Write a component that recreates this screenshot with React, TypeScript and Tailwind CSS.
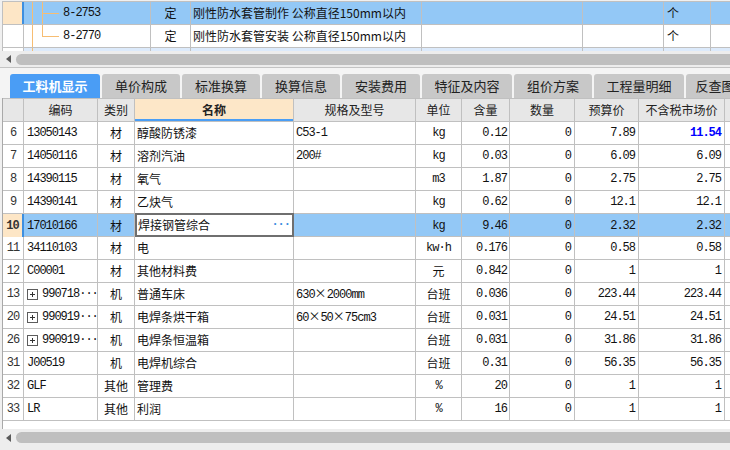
import React from 'react';

const mono = "font-['Liberation_Mono','Noto_Sans_CJK_SC',monospace] text-[12px] tracking-[-1px]";
const cjk = "font-['Noto_Sans_CJK_SC','Liberation_Sans',sans-serif] text-[12px]";
const isAscii = (s: string) => /^[\x20-\x7e·×]*$/.test(s);
const fontFor = (s: string) => (isAscii(s) ? mono : cjk);

const upperCols = 'grid grid-cols-[21px_127px_40px_231px_161px_81px_47px_1fr]';
const lowerCols = 'grid grid-cols-[21px_74px_37px_159px_122px_46px_48px_65px_64px_86px_1fr]';

type Row = {
  n: string;
  code: string;
  cat: string;
  name: string;
  spec: string;
  unit: string;
  qty: string;
  num: string;
  budget: string;
  market: string;
  plus?: boolean;
  blue?: boolean;
  sel?: boolean;
};

const rows: Row[] = [
  { n: '6', code: '13050143', cat: '材', name: '醇酸防锈漆', spec: 'C53-1', unit: 'kg', qty: '0.12', num: '0', budget: '7.89', market: '11.54', blue: true },
  { n: '7', code: '14050116', cat: '材', name: '溶剂汽油', spec: '200#', unit: 'kg', qty: '0.03', num: '0', budget: '6.09', market: '6.09' },
  { n: '8', code: '14390115', cat: '材', name: '氧气', spec: '', unit: 'm3', qty: '1.87', num: '0', budget: '2.75', market: '2.75' },
  { n: '9', code: '14390141', cat: '材', name: '乙炔气', spec: '', unit: 'kg', qty: '0.62', num: '0', budget: '12.1', market: '12.1' },
  { n: '10', code: '17010166', cat: '材', name: '焊接钢管综合', spec: '', unit: 'kg', qty: '9.46', num: '0', budget: '2.32', market: '2.32', sel: true },
  { n: '11', code: '34110103', cat: '材', name: '电', spec: '', unit: 'kw·h', qty: '0.176', num: '0', budget: '0.58', market: '0.58' },
  { n: '12', code: 'C00001', cat: '材', name: '其他材料费', spec: '', unit: '元', qty: '0.842', num: '0', budget: '1', market: '1' },
  { n: '13', code: '990718···', cat: '机', name: '普通车床', spec: '630×2000mm', unit: '台班', qty: '0.036', num: '0', budget: '223.44', market: '223.44', plus: true },
  { n: '20', code: '990919···', cat: '机', name: '电焊条烘干箱', spec: '60×50×75cm3', unit: '台班', qty: '0.031', num: '0', budget: '24.51', market: '24.51', plus: true },
  { n: '26', code: '990919···', cat: '机', name: '电焊条恒温箱', spec: '', unit: '台班', qty: '0.031', num: '0', budget: '31.86', market: '31.86', plus: true },
  { n: '31', code: 'J00519', cat: '机', name: '电焊机综合', spec: '', unit: '台班', qty: '0.31', num: '0', budget: '56.35', market: '56.35' },
  { n: '32', code: 'GLF', cat: '其他', name: '管理费', spec: '', unit: '%', qty: '20', num: '0', budget: '1', market: '1' },
  { n: '33', code: 'LR', cat: '其他', name: '利润', spec: '', unit: '%', qty: '16', num: '0', budget: '1', market: '1' },
];

const tabs: { label: string; w: string }[] = [
  { label: '工料机显示', w: 'w-[90px]' },
  { label: '单价构成', w: 'w-[78px]' },
  { label: '标准换算', w: 'w-[78px]' },
  { label: '换算信息', w: 'w-[78px]' },
  { label: '安装费用', w: 'w-[78px]' },
  { label: '特征及内容', w: 'w-[90px]' },
  { label: '组价方案', w: 'w-[78px]' },
  { label: '工程量明细', w: 'w-[90px]' },
  { label: '反查图形工程量', w: 'w-[110px]' },
];

function HScroll({ className }: { className: string }) {
  return (
    <div className={`flex bg-[#ededed] ${className}`}>
      <div className="w-[16px] h-[11px] flex items-center justify-center">
        <svg width="5" height="8" viewBox="0 0 5 8">
          <polygon points="5,0 5,8 0,4" fill="#5a5a5a" />
        </svg>
      </div>
      <div className="flex-1 h-[11px] rounded-l-full bg-[#bfbfbf]" />
    </div>
  );
}

function Tree({ last }: { last?: boolean }) {
  return (
    <svg width="39" height="22" className="shrink-0" shapeRendering="crispEdges">
      <line x1="8.5" y1="0" x2="8.5" y2="22" stroke="#f7bd72" />
      <line x1="18.5" y1="0" x2="18.5" y2={last ? 11 : 22} stroke="#f7bd72" />
      <line x1="18" y1="11.5" x2="35" y2="11.5" stroke="#f7bd72" />
    </svg>
  );
}

function PlusBox() {
  return (
    <svg width="11" height="11" className="shrink-0" shapeRendering="crispEdges">
      <rect x="0.5" y="0.5" width="10" height="10" fill="white" stroke="#5c5c5c" />
      <line x1="3" y1="5.5" x2="8" y2="5.5" stroke="#333" />
      <line x1="5.5" y1="3" x2="5.5" y2="8" stroke="#333" />
    </svg>
  );
}

// spec strings: digits in mono, the "×" sign full width as in the original
function Spec({ text }: { text: string }) {
  const parts = text.split('×');
  return (
    <span className={fontFor(text)}>
      {parts.map((p, i) => (
        <React.Fragment key={i}>
          {i > 0 && <span className={`${cjk} tracking-normal`}>×</span>}
          {p}
        </React.Fragment>
      ))}
    </span>
  );
}

const cell = 'flex items-center border-r border-[#c0c0c0] overflow-hidden whitespace-nowrap';

function UpperRow({ code, sel, last }: { code: string; sel?: boolean; last?: boolean }) {
  return (
    <div className={`${upperCols} h-[23px] border-b border-[#c0c0c0] text-[#111] ${sel ? 'bg-[#93c8f6]' : 'bg-white'}`}>
      <div className={sel ? 'bg-[#fde6c6] border-r-2 border-[#3d8fe0]' : 'bg-white border-r border-[#c0c0c0]'} />
      <div className={cell}>
        <Tree last={last} />
        <span className={mono}>{code}</span>
      </div>
      <div className={`${cell} justify-center`}>
        <span className={cjk}>定</span>
      </div>
      <div className={`${cell} pl-[2px]`}>
        <span className={cjk}>{sel ? '刚性防水套管制作 公称直径150mm以内' : '刚性防水套管安装 公称直径150mm以内'}</span>
      </div>
      <div className={cell} />
      <div className={cell} />
      <div className={`${cell} pl-[3px]`}>
        <span className={cjk}>个</span>
      </div>
      <div />
    </div>
  );
}

export default function App() {
  return (
    <div className="w-[730px] h-[450px] overflow-hidden bg-[#f0f0f0] text-[#111]">
      {/* upper grid */}
      <div className="pt-px">
        <div className="ml-[2px] border-l border-t border-[#c0c0c0] bg-white">
          <UpperRow code="8-2753" sel />
          <UpperRow code="8-2770" last />
          <div className={`${upperCols} h-[3px] bg-[#dceafb]`}>
            <div className="border-r border-[#c0c0c0] bg-white" />
            <div className="border-r border-[#c0c0c0] pl-[8px]">
              <div className="w-px h-full bg-[#f7bd72]" />
            </div>
            <div className="border-r border-[#c0c0c0]" />
            <div className="border-r border-[#c0c0c0]" />
            <div className="border-r border-[#c0c0c0]" />
            <div className="border-r border-[#c0c0c0]" />
            <div className="border-r border-[#c0c0c0]" />
            <div />
          </div>
        </div>
      </div>
      <HScroll className="h-[16px] items-center border-b border-[#c4c4c4] box-content" />

      {/* tabs */}
      <div className="h-[30px] pt-[6px] pl-[10px] flex gap-[2px] bg-[#f4f4f4] whitespace-nowrap overflow-hidden">
        {tabs.map((t, i) => (
          <div
            key={t.label}
            className={`${t.w} shrink-0 h-[24px] rounded-t-[3px] flex items-center justify-center font-['Noto_Sans_CJK_SC',sans-serif] text-[13px] ${
              i === 0 ? 'bg-[#4a9df5] text-white font-bold' : 'bg-[#c8c8c8] text-[#222]'
            }`}
          >
            {t.label}
          </div>
        ))}
      </div>

      {/* lower grid */}
      <div className="ml-[2px] border-l border-[#a9a9a9] bg-white">
        <div className={`${lowerCols} h-[24px] border-t border-b border-[#c0c0c0] bg-[#e7e7e7] text-[#222]`}>
          <div className="border-r border-[#c0c0c0]" />
          {['编码', '类别', '名称', '规格及型号', '单位', '含量', '数量', '预算价', '不含税市场价'].map((h) => (
            <div
              key={h}
              className={`${cell} justify-center ${cjk} ${
                h === '名称' ? 'bg-[#fde7c8] font-bold shadow-[inset_0_-2px_0_#4a9ef5]' : ''
              }`}
            >
              {h}
            </div>
          ))}
          <div />
        </div>

        {rows.map((r) => (
          <div
            key={r.n}
            className={`${lowerCols} h-[23px] border-b border-[#c0c0c0] ${r.sel ? 'bg-[#93c8f6]' : 'bg-white'}`}
          >
            <div
              className={`flex items-center justify-center ${
                r.sel ? 'bg-[#fde6c6] border-r-2 border-[#3d8fe0] font-bold' : 'border-r border-[#c0c0c0]'
              } ${mono} text-[#333]`}
            >
              {r.n}
            </div>
            <div className={`${cell} pl-[3px] gap-[4px]`}>
              {r.plus && <PlusBox />}
              <span className={mono}>{r.code}</span>
            </div>
            <div className={`${cell} justify-center`}>
              <span className={cjk}>{r.cat}</span>
            </div>
            {r.sel ? (
              <div className="flex items-center justify-between pl-[3px] pr-[4px] bg-white shadow-[inset_0_0_0_2px_#6f6f6f] -mt-px h-[24px] overflow-hidden whitespace-nowrap">
                <span className={cjk}>{r.name}</span>
                <span className={`${mono} font-bold text-[#3b8de0]`}>···</span>
              </div>
            ) : (
              <div className={`${cell} pl-[2px]`}>
                <span className={cjk}>{r.name}</span>
              </div>
            )}
            <div className={`${cell} pl-[2px]`}>
              <Spec text={r.spec} />
            </div>
            <div className={`${cell} justify-center`}>
              <span className={fontFor(r.unit)}>{r.unit}</span>
            </div>
            <div className={`${cell} justify-end pr-[2px]`}>
              <span className={mono}>{r.qty}</span>
            </div>
            <div className={`${cell} justify-end pr-[3px]`}>
              <span className={mono}>{r.num}</span>
            </div>
            <div className={`${cell} justify-end pr-[3px]`}>
              <span className={mono}>{r.budget}</span>
            </div>
            <div className={`${cell} justify-end pr-[3px]`}>
              <span className={`${mono} ${r.blue ? 'font-bold text-[#0000ff]' : ''}`}>{r.market}</span>
            </div>
            <div />
          </div>
        ))}
        <div className="h-[8px]" />
      </div>
      <HScroll className="h-[21px] items-start pt-[3px]" />
    </div>
  );
}
